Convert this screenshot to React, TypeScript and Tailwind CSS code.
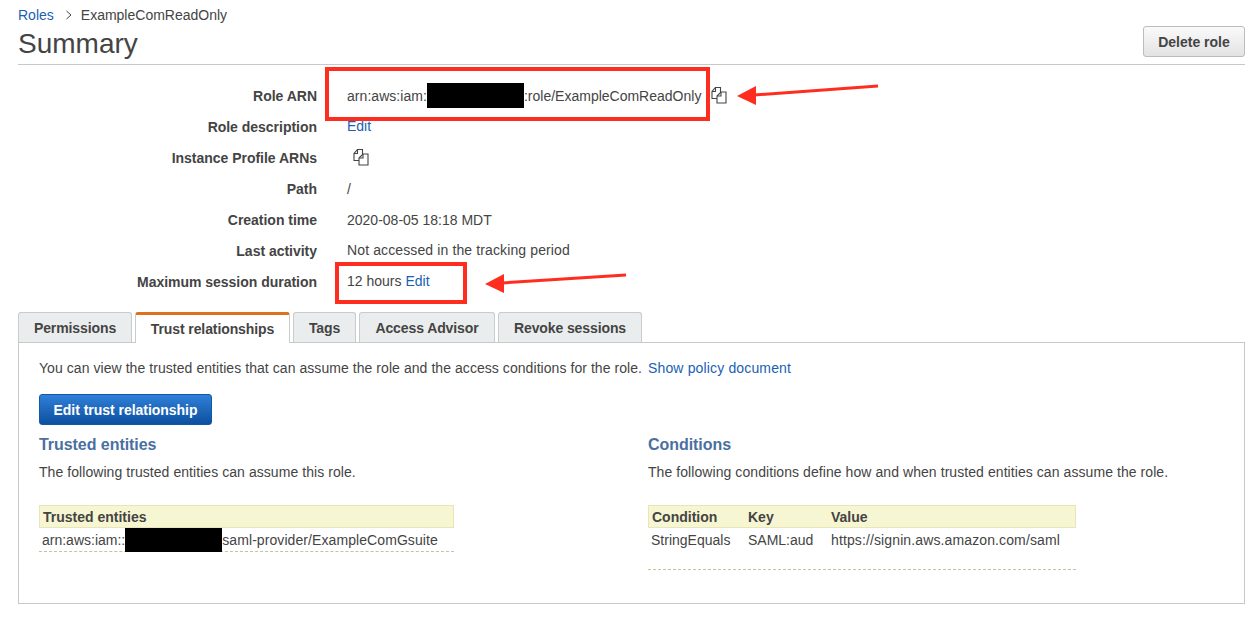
import React from "react";

const CopyIcon = () => (
  <svg width="16" height="17" viewBox="0 0 16 17" fill="none" stroke="#444" strokeWidth="1.1" className="block">
    <path d="M6 11.5H1V4.5L4.5 .5H9.5V5" />
    <path d="M4.5 .5V4.5H1" />
    <path d="M10 5H15V16H6V9Z" fill="#fff" />
    <path d="M10 5V9H6" />
  </svg>
);

const Redact = ({ w, h }: { w: string; h: string }) => (
  <span className={`inline-block bg-black align-middle ${w} ${h}`} />
);

const Row = ({ label, children }: { label: string; children: React.ReactNode }) => (
  <div className="flex h-[31px] items-center">
    <div className="w-[299px] shrink-0 text-right font-bold tracking-[-0.02px]">{label}</div>
    <div className="ml-[30px] flex items-center whitespace-nowrap">{children}</div>
  </div>
);

const Tab = ({ label, active, w }: { label: string; active?: boolean; w: string }) =>
  active ? (
    <div className={`relative z-10 -mb-px flex h-[31px] items-center justify-center rounded-t-[3px] border border-b-0 border-x-[#c8cccc] border-t-[3px] border-t-[#e0711c] bg-white font-bold tracking-[-0.1px] ${w}`}>
      {label}
    </div>
  ) : (
    <div className={`flex h-[30px] items-center justify-center rounded-t-[3px] border border-b-0 border-[#c8cccc] bg-[#eaeded] font-bold tracking-[-0.1px] ${w}`}>
      {label}
    </div>
  );

const Arrow = ({ className, w, h, line, head }: { className: string; w: number; h: number; line: string; head: string }) => (
  <svg width={w} height={h} viewBox={`0 0 ${w} ${h}`} className={`absolute ${className}`}>
    <path d={line} stroke="#ff2d20" strokeWidth="3" fill="none" />
    <path d={head} fill="#ff2d20" />
  </svg>
);

export default function App() {
  return (
    <div className="relative h-[623px] overflow-hidden bg-white pl-[18px] pr-[14px] font-['Liberation_Sans',Arial,sans-serif] text-[14px] leading-[20px] text-[#444]">
      <div className="flex h-[30px] items-center">
        <span className="text-[#1a5fb4]">Roles</span>
        <svg width="8" height="10" viewBox="0 0 8 10" fill="none" stroke="#444" strokeWidth="1" className="ml-[11px] mr-[8px]">
          <path d="M1.5 1L6 5L1.5 9" />
        </svg>
        <span>ExampleComReadOnly</span>
      </div>

      <div className="flex h-[35px] items-start justify-between border-b border-[#c8c8c8]">
        <h1 className="mt-[-2px] text-[28px] leading-[32px] font-normal">Summary</h1>
        <button className="mt-[-4px] h-[31px] w-[102px] rounded-[3px] border border-[#bcbcbc] bg-gradient-to-b from-[#fafafa] to-[#e3e3e3] font-bold">
          Delete role
        </button>
      </div>

      <div className="pt-[15px]">
        <Row label="Role ARN">
          <span className="tracking-[0.05px]">arn:aws:iam:</span>
          <Redact w="w-[97px]" h="h-[25px]" />
          <span>:role/ExampleComReadOnly</span>
          <span className="ml-[10px]"><CopyIcon /></span>
        </Row>
        <Row label="Role description">
          <span className="-mt-[2px] text-[#1a5fb4]">Edit</span>
        </Row>
        <Row label="Instance Profile ARNs">
          <span className="ml-[6px]"><CopyIcon /></span>
        </Row>
        <Row label="Path">/</Row>
        <Row label="Creation time">2020-08-05 18:18 MDT</Row>
        <Row label="Last activity"><span className="-mt-[1px] tracking-[0.12px]">Not accessed in the tracking period</span></Row>
        <Row label="Maximum session duration">
          <span className="-mt-[1px]">12 hours</span>
          <span className="-mt-[1px] ml-[4px] text-[#1a5fb4]">Edit</span>
        </Row>
      </div>

      <div className="mt-[15px] flex items-end gap-[3px]">
        <Tab label="Permissions" w="w-[114px]" />
        <Tab label="Trust relationships" active w="w-[155px]" />
        <Tab label="Tags" w="w-[63px]" />
        <Tab label="Access Advisor" w="w-[136px]" />
        <Tab label="Revoke sessions" w="w-[144px]" />
      </div>

      <div className="h-[262px] border border-[#c8c8c8] px-[20px] pt-[15px]">
        <p className="tracking-[0.06px]">
          You can view the trusted entities that can assume the role and the access conditions for the role.{" "}
          <span className="ml-[2px] tracking-[0.15px] text-[#1a5fb4]">Show policy document</span>
        </p>
        <button className="mt-[16px] block h-[31px] w-[173px] rounded-[3px] border border-[#0f5aa8] bg-gradient-to-b from-[#2f80d8] to-[#0d50a0] font-bold tracking-[-0.03px] text-white">
          Edit trust relationship
        </button>
        <div className="mt-[9px] flex">
          <div className="w-[609px] shrink-0">
            <h2 className="text-[16px] leading-[22px] font-bold tracking-[-0.05px] text-[#4a6fa1]">Trusted entities</h2>
            <p className="mt-[6px] tracking-[0.06px]">The following trusted entities can assume this role.</p>
            <div className="mt-[23px] w-[415px]">
              <div className="flex h-[23px] items-center border border-[#e8e6b8] bg-[#f7f6d2] pl-[3px] font-bold">Trusted entities</div>
              <div className="flex h-[24px] items-center border-b border-dashed border-[#c4c49c] pl-[3px]">
                <span>arn:aws:iam::</span>
                <Redact w="w-[97px]" h="h-[24px]" />
                <span className="tracking-[0.08px]">saml-provider/ExampleComGsuite</span>
              </div>
            </div>
          </div>
          <div>
            <h2 className="text-[16px] leading-[22px] font-bold tracking-[-0.05px] text-[#4a6fa1]">Conditions</h2>
            <p className="mt-[6px] tracking-[0.07px]">The following conditions define how and when trusted entities can assume the role.</p>
            <div className="mt-[23px] w-[428px]">
              <div className="flex h-[23px] items-center border border-[#e8e6b8] bg-[#f7f6d2] font-bold">
                <span className="w-[99px] pl-[3px]">Condition</span>
                <span className="w-[83px]">Key</span>
                <span>Value</span>
              </div>
              <div className="flex h-[42px] items-start border-b border-dashed border-[#c4c49c] pt-[2px]">
                <span className="w-[100px] pl-[3px]">StringEquals</span>
                <span className="w-[83px]">SAML:aud</span>
                <span className="tracking-[0.12px]">https://signin.aws.amazon.com/saml</span>
              </div>
            </div>
          </div>
        </div>
      </div>

      <div className="absolute left-[325px] top-[67px] h-[54px] w-[385px] border-[4px] border-[#ff2d20]" />
      <div className="absolute left-[335px] top-[262px] h-[42px] w-[132px] border-[4px] border-[#ff2d20]" />
      <Arrow className="left-[736px] top-[80px]" w={145} h={28} line="M142 6L18 15" head="M1 16L20 6L20 25Z" />
      <Arrow className="left-[484px] top-[268px]" w={145} h={28} line="M142 7L18 15" head="M1 16L20 6L20 25Z" />
    </div>
  );
}
